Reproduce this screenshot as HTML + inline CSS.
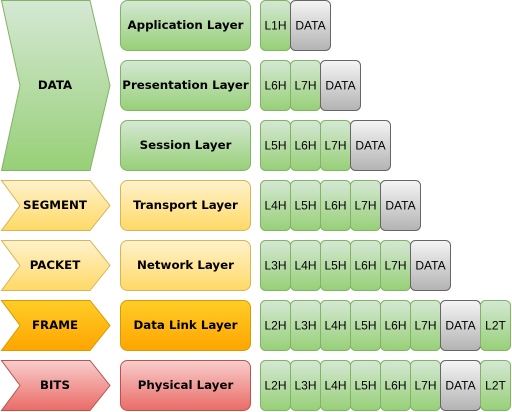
<!DOCTYPE html>
<html><head><meta charset="utf-8"><style>
html,body{margin:0;padding:0;background:#fff;width:512px;height:412px;overflow:hidden}
.b{font-family:"DejaVu Sans",Verdana,sans-serif;font-weight:bold;font-size:11.8px;fill:#000}
.c{font-family:"Liberation Sans",Arial,sans-serif;font-weight:normal;font-size:12px;fill:#000}
</style></head><body>
<svg width="512" height="412" xmlns="http://www.w3.org/2000/svg">
<defs>
<linearGradient id="g" x1="0" y1="0" x2="0" y2="1"><stop offset="0" stop-color="#d5e8d4"/><stop offset="1" stop-color="#97d077"/></linearGradient>
<linearGradient id="y" x1="0" y1="0" x2="0" y2="1"><stop offset="0" stop-color="#fff2cc"/><stop offset="1" stop-color="#ffd966"/></linearGradient>
<linearGradient id="o" x1="0" y1="0" x2="0" y2="1"><stop offset="0" stop-color="#ffcd28"/><stop offset="1" stop-color="#ffa500"/></linearGradient>
<linearGradient id="r" x1="0" y1="0" x2="0" y2="1"><stop offset="0" stop-color="#f8cecc"/><stop offset="1" stop-color="#ea6b66"/></linearGradient>
<linearGradient id="k" x1="0" y1="0" x2="0" y2="1"><stop offset="0" stop-color="#f5f5f5"/><stop offset="1" stop-color="#b3b3b3"/></linearGradient>
</defs>
<g class="b" text-anchor="middle">
<polygon points="1.5,0.5 90,0.5 110,85.5 90,170.5 1.5,170.5 20,85.5" fill="url(#g)" stroke="#82b366"/>
<text x="55" y="89">DATA</text>
<polygon points="1.5,180.5 90,180.5 110,205.5 90,230.5 1.5,230.5 20,205.5" fill="url(#y)" stroke="#d6b656"/>
<text x="55" y="209">SEGMENT</text>
<polygon points="1.5,240.5 90,240.5 110,265.5 90,290.5 1.5,290.5 20,265.5" fill="url(#y)" stroke="#d6b656"/>
<text x="55" y="269">PACKET</text>
<polygon points="1.5,300.5 90,300.5 110,325.5 90,350.5 1.5,350.5 20,325.5" fill="url(#o)" stroke="#d79b00"/>
<text x="55" y="329">FRAME</text>
<polygon points="1.5,360.5 90,360.5 110,385.5 90,410.5 1.5,410.5 20,385.5" fill="url(#r)" stroke="#b85450"/>
<text x="55" y="389">BITS</text>
<rect x="120.5" y="0.5" width="130" height="50" rx="7" fill="url(#g)" stroke="#82b366"/>
<text x="185.5" y="29">Application Layer</text>
<rect x="120.5" y="60.5" width="130" height="50" rx="7" fill="url(#g)" stroke="#82b366"/>
<text x="185.5" y="89">Presentation Layer</text>
<rect x="120.5" y="120.5" width="130" height="50" rx="7" fill="url(#g)" stroke="#82b366"/>
<text x="185.5" y="149">Session Layer</text>
<rect x="120.5" y="180.5" width="130" height="50" rx="7" fill="url(#y)" stroke="#d6b656"/>
<text x="185.5" y="209">Transport Layer</text>
<rect x="120.5" y="240.5" width="130" height="50" rx="7" fill="url(#y)" stroke="#d6b656"/>
<text x="185.5" y="269">Network Layer</text>
<rect x="120.5" y="300.5" width="130" height="50" rx="7" fill="url(#o)" stroke="#d79b00"/>
<text x="185.5" y="329">Data Link Layer</text>
<rect x="120.5" y="360.5" width="130" height="50" rx="7" fill="url(#r)" stroke="#b85450"/>
<text x="185.5" y="389">Physical Layer</text>
</g>
<g class="c" text-anchor="middle" stroke-width="1">
<!-- row 0 -->
<rect x="260.5" y="0.5" width="30" height="50" rx="5" fill="url(#g)" stroke="#82b366"/><text x="275.5" y="29.5">L1H</text>
<rect x="290.5" y="0.5" width="40" height="50" rx="5" fill="url(#k)" stroke="#666"/><text x="310.5" y="29.5">DATA</text>
<!-- row 1 -->
<rect x="260.5" y="60.5" width="30" height="50" rx="5" fill="url(#g)" stroke="#82b366"/><text x="275.5" y="89.5">L6H</text>
<rect x="290.5" y="60.5" width="30" height="50" rx="5" fill="url(#g)" stroke="#82b366"/><text x="305.5" y="89.5">L7H</text>
<rect x="320.5" y="60.5" width="40" height="50" rx="5" fill="url(#k)" stroke="#666"/><text x="340.5" y="89.5">DATA</text>
<!-- row 2 -->
<rect x="260.5" y="120.5" width="30" height="50" rx="5" fill="url(#g)" stroke="#82b366"/><text x="275.5" y="149.5">L5H</text>
<rect x="290.5" y="120.5" width="30" height="50" rx="5" fill="url(#g)" stroke="#82b366"/><text x="305.5" y="149.5">L6H</text>
<rect x="320.5" y="120.5" width="30" height="50" rx="5" fill="url(#g)" stroke="#82b366"/><text x="335.5" y="149.5">L7H</text>
<rect x="350.5" y="120.5" width="40" height="50" rx="5" fill="url(#k)" stroke="#666"/><text x="370.5" y="149.5">DATA</text>
<!-- row 3 -->
<rect x="260.5" y="180.5" width="30" height="50" rx="5" fill="url(#g)" stroke="#82b366"/><text x="275.5" y="209.5">L4H</text>
<rect x="290.5" y="180.5" width="30" height="50" rx="5" fill="url(#g)" stroke="#82b366"/><text x="305.5" y="209.5">L5H</text>
<rect x="320.5" y="180.5" width="30" height="50" rx="5" fill="url(#g)" stroke="#82b366"/><text x="335.5" y="209.5">L6H</text>
<rect x="350.5" y="180.5" width="30" height="50" rx="5" fill="url(#g)" stroke="#82b366"/><text x="365.5" y="209.5">L7H</text>
<rect x="380.5" y="180.5" width="40" height="50" rx="5" fill="url(#k)" stroke="#666"/><text x="400.5" y="209.5">DATA</text>
<!-- row 4 -->
<rect x="260.5" y="240.5" width="30" height="50" rx="5" fill="url(#g)" stroke="#82b366"/><text x="275.5" y="269.5">L3H</text>
<rect x="290.5" y="240.5" width="30" height="50" rx="5" fill="url(#g)" stroke="#82b366"/><text x="305.5" y="269.5">L4H</text>
<rect x="320.5" y="240.5" width="30" height="50" rx="5" fill="url(#g)" stroke="#82b366"/><text x="335.5" y="269.5">L5H</text>
<rect x="350.5" y="240.5" width="30" height="50" rx="5" fill="url(#g)" stroke="#82b366"/><text x="365.5" y="269.5">L6H</text>
<rect x="380.5" y="240.5" width="30" height="50" rx="5" fill="url(#g)" stroke="#82b366"/><text x="395.5" y="269.5">L7H</text>
<rect x="410.5" y="240.5" width="40" height="50" rx="5" fill="url(#k)" stroke="#666"/><text x="430.5" y="269.5">DATA</text>
<!-- row 5 -->
<rect x="260.5" y="300.5" width="30" height="50" rx="5" fill="url(#g)" stroke="#82b366"/><text x="275.5" y="329.5">L2H</text>
<rect x="290.5" y="300.5" width="30" height="50" rx="5" fill="url(#g)" stroke="#82b366"/><text x="305.5" y="329.5">L3H</text>
<rect x="320.5" y="300.5" width="30" height="50" rx="5" fill="url(#g)" stroke="#82b366"/><text x="335.5" y="329.5">L4H</text>
<rect x="350.5" y="300.5" width="30" height="50" rx="5" fill="url(#g)" stroke="#82b366"/><text x="365.5" y="329.5">L5H</text>
<rect x="380.5" y="300.5" width="30" height="50" rx="5" fill="url(#g)" stroke="#82b366"/><text x="395.5" y="329.5">L6H</text>
<rect x="410.5" y="300.5" width="30" height="50" rx="5" fill="url(#g)" stroke="#82b366"/><text x="425.5" y="329.5">L7H</text>
<rect x="440.5" y="300.5" width="40" height="50" rx="5" fill="url(#k)" stroke="#666"/><text x="460.5" y="329.5">DATA</text>
<rect x="480.5" y="300.5" width="30" height="50" rx="5" fill="url(#g)" stroke="#82b366"/><text x="495.5" y="329.5">L2T</text>
<!-- row 6 -->
<rect x="260.5" y="360.5" width="30" height="50" rx="5" fill="url(#g)" stroke="#82b366"/><text x="275.5" y="389.5">L2H</text>
<rect x="290.5" y="360.5" width="30" height="50" rx="5" fill="url(#g)" stroke="#82b366"/><text x="305.5" y="389.5">L3H</text>
<rect x="320.5" y="360.5" width="30" height="50" rx="5" fill="url(#g)" stroke="#82b366"/><text x="335.5" y="389.5">L4H</text>
<rect x="350.5" y="360.5" width="30" height="50" rx="5" fill="url(#g)" stroke="#82b366"/><text x="365.5" y="389.5">L5H</text>
<rect x="380.5" y="360.5" width="30" height="50" rx="5" fill="url(#g)" stroke="#82b366"/><text x="395.5" y="389.5">L6H</text>
<rect x="410.5" y="360.5" width="30" height="50" rx="5" fill="url(#g)" stroke="#82b366"/><text x="425.5" y="389.5">L7H</text>
<rect x="440.5" y="360.5" width="40" height="50" rx="5" fill="url(#k)" stroke="#666"/><text x="460.5" y="389.5">DATA</text>
<rect x="480.5" y="360.5" width="30" height="50" rx="5" fill="url(#g)" stroke="#82b366"/><text x="495.5" y="389.5">L2T</text>
</g>
</svg>
</body></html>
